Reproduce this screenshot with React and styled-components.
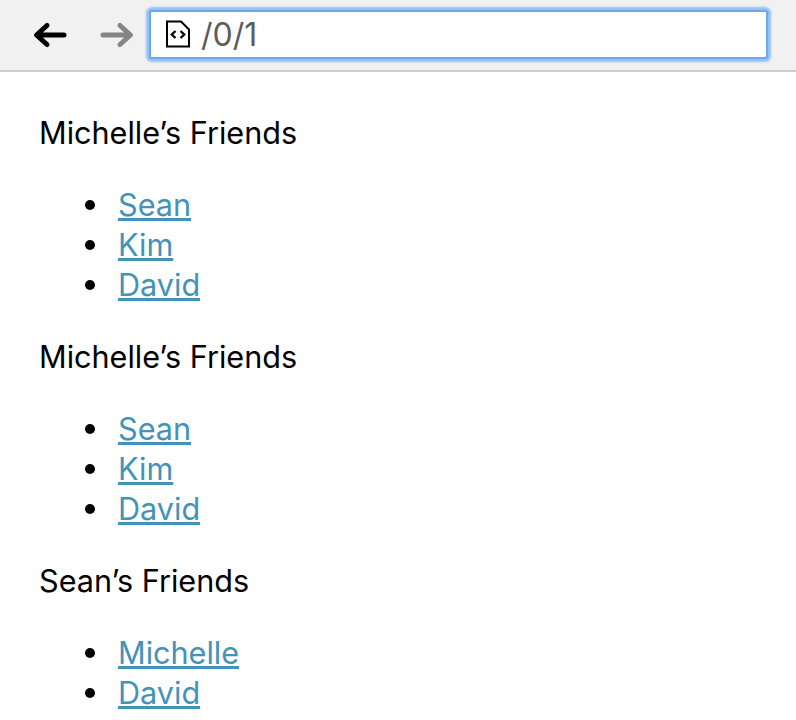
import React from "react";
import styled, { createGlobalStyle } from "styled-components";

const GlobalStyle = createGlobalStyle`
  html, body {
    margin: 0;
    padding: 0;
    height: 100%;
    overflow: hidden;
    background: #fff;
    font-family: Inter, "Liberation Sans", sans-serif;
  }
`;

const sections = [
  { title: "Michelle’s Friends", friends: ["Sean", "Kim", "David"] },
  { title: "Michelle’s Friends", friends: ["Sean", "Kim", "David"] },
  { title: "Sean’s Friends", friends: ["Michelle", "David"] },
];

function BackIcon({ color }) {
  return (
    <svg width="36" height="28" viewBox="0 0 36 28" fill="none">
      <path
        d="M32 14H5M15 4.5L4.5 14L15 23.5"
        stroke={color}
        strokeWidth="5"
        strokeLinecap="round"
        strokeLinejoin="round"
      />
    </svg>
  );
}

function ForwardIcon({ color }) {
  return (
    <svg width="36" height="28" viewBox="0 0 36 28" fill="none">
      <path
        d="M3 14H30M20 4.5L30.5 14L20 23.5"
        stroke={color}
        strokeWidth="5"
        strokeLinecap="round"
        strokeLinejoin="round"
      />
    </svg>
  );
}

function FileIcon() {
  return (
    <svg width="26" height="28" viewBox="0 0 26 28" fill="none">
      <path d="M2 1.5H16L24 9.5V26.5H2Z" stroke="#000" strokeWidth="2" />
      <path
        d="M10.5 11L6.8 14.5L10.5 18M15.5 11L19.2 14.5L15.5 18"
        stroke="#000"
        strokeWidth="2.4"
      />
    </svg>
  );
}

export default function App() {
  return (
    <>
      <GlobalStyle />
      <Toolbar>
        <NavButton>
          <BackIcon color="#000" />
        </NavButton>
        <NavButton>
          <ForwardIcon color="#858585" />
        </NavButton>
        <AddressBar>
          <FileIcon />
          <AddressText>/0/1</AddressText>
        </AddressBar>
      </Toolbar>
      <Content>
        {sections.map((section, i) => (
          <section key={i}>
            <Title>{section.title}</Title>
            <FriendList>
              {section.friends.map((name) => (
                <FriendItem key={name}>
                  <FriendLink href="#">{name}</FriendLink>
                </FriendItem>
              ))}
            </FriendList>
          </section>
        ))}
      </Content>
    </>
  );
}

const Toolbar = styled.div`
  display: flex;
  align-items: center;
  height: 70px;
  padding-left: 32px;
  background: #f1f1f1;
  border-bottom: 2px solid #cfcfcf;
`;

const NavButton = styled.div`
  display: flex;
  width: 68px;
  &:nth-child(2) {
    width: 49px;
  }
`;

const AddressBar = styled.div`
  display: flex;
  align-items: center;
  gap: 10px;
  box-sizing: border-box;
  width: 619px;
  height: 49px;
  margin-top: -2px;
  padding-left: 14px;
  background: #fff;
  border: 2px solid #6aa9ee;
  border-radius: 3px;
  box-shadow: 0 0 2px 3px #94c1f5;
`;

const AddressText = styled.span`
  font-size: 32px;
  color: #5c5c5c;
`;

const Content = styled.div`
  padding: 41px 0 0 39px;
  font-size: 30.6px;
  line-height: 40px;
  color: #000;
`;

const Title = styled.p`
  margin: 0;
`;

const FriendList = styled.ul`
  margin: 32px 0;
  padding-left: 79px;
  list-style: none;
`;

const FriendItem = styled.li`
  position: relative;
  &::before {
    content: "";
    position: absolute;
    left: -33px;
    top: 15px;
    width: 10px;
    height: 10px;
    border-radius: 50%;
    background: #000;
  }
`;

const FriendLink = styled.a`
  color: #4393b9;
  text-decoration: underline;
`;
